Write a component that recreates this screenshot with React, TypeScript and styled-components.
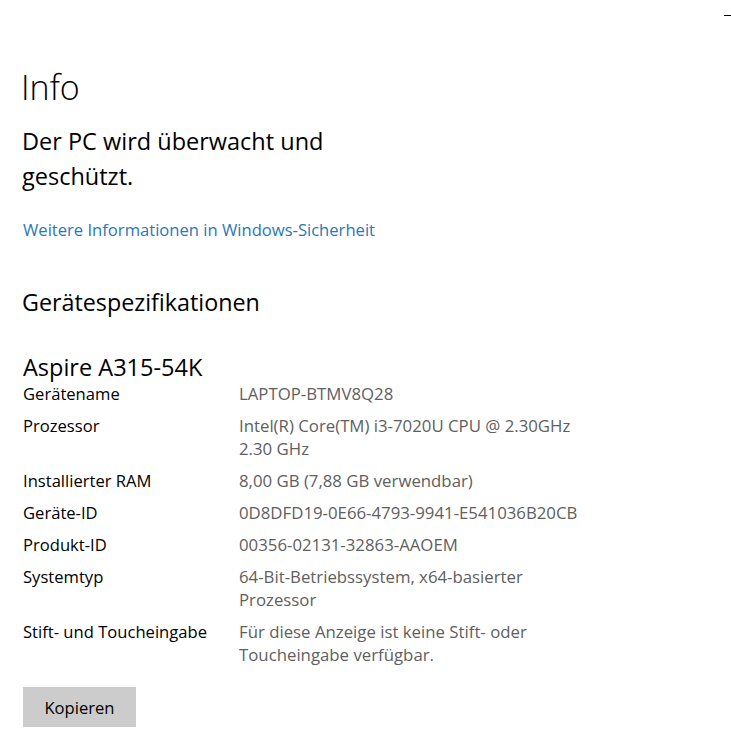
import React from "react";
import styled, { createGlobalStyle } from "styled-components";

const Global = createGlobalStyle`
  html, body { margin: 0; padding: 0; background: #ffffff; }
  body { font-family: "Open Sans", "Noto Sans", "Liberation Sans", sans-serif; color: #000; }
`;

const Page = styled.div`
  position: relative;
  width: 731px;
  height: 744px;
  overflow: hidden;
  box-sizing: border-box;
  padding: 67px 0 0 22px;
  display: flex;
  flex-direction: column;
  align-items: flex-start;
`;

const Minimize = styled.div`
  position: absolute;
  top: 15px;
  left: 724px;
  width: 8px;
  height: 1px;
  background: #000;
`;

const Title = styled.h1`
  margin: 0 0 0 -1px;
  font-size: 34px;
  line-height: 40px;
  font-weight: 300;
`;

const Subtitle = styled.p`
  margin: 17px 0 0 0;
  font-size: 23.5px;
  line-height: 35px;
  font-weight: 400;
  width: 340px;
`;

const Link = styled.a`
  margin: 24px 0 0 1px;
  font-size: 16.6px;
  line-height: 24px;
  color: #2a78b5;
  text-decoration: none;
`;

const SectionTitle = styled.h2`
  margin: 44px 0 0 0;
  font-size: 23.3px;
  line-height: 32px;
  font-weight: 400;
`;

const DeviceName = styled.h3`
  margin: 35px 0 0 1px;
  font-size: 23.5px;
  line-height: 28px;
  font-weight: 400;
`;

const SpecList = styled.dl`
  margin: 1px 0 0 1px;
  display: grid;
  grid-template-columns: 216px 360px;
  row-gap: 9px;
  font-size: 16.6px;
  line-height: 23px;
`;

const Label = styled.dt`
  margin: 0;
  color: #000;
`;

const Value = styled.dd`
  margin: 0;
  color: #606060;
  font-size: 16.8px;
`;

const CopyButton = styled.button`
  margin: 21px 0 0 1px;
  width: 113px;
  height: 40px;
  border: none;
  background: #cccccc;
  font-family: inherit;
  font-size: 16.6px;
  color: #000;
  padding: 0;
`;

const specs: [string, string][] = [
  ["Gerätename", "LAPTOP-BTMV8Q28"],
  ["Prozessor", "Intel(R) Core(TM) i3-7020U CPU @ 2.30GHz 2.30 GHz"],
  ["Installierter RAM", "8,00 GB (7,88 GB verwendbar)"],
  ["Geräte-ID", "0D8DFD19-0E66-4793-9941-E541036B20CB"],
  ["Produkt-ID", "00356-02131-32863-AAOEM"],
  ["Systemtyp", "64-Bit-Betriebssystem, x64-basierter Prozessor"],
  ["Stift- und Toucheingabe", "Für diese Anzeige ist keine Stift- oder Toucheingabe verfügbar."],
];

export default function App() {
  return (
    <>
      <Global />
      <Page>
        <Minimize />
        <Title>Info</Title>
        <Subtitle>Der PC wird überwacht und geschützt.</Subtitle>
        <Link href="#">Weitere Informationen in Windows-Sicherheit</Link>
        <SectionTitle>Gerätespezifikationen</SectionTitle>
        <DeviceName>Aspire A315-54K</DeviceName>
        <SpecList>
          {specs.map(([k, v]) => (
            <React.Fragment key={k}>
              <Label>{k}</Label>
              <Value>{v}</Value>
            </React.Fragment>
          ))}
        </SpecList>
        <CopyButton>Kopieren</CopyButton>
      </Page>
    </>
  );
}
